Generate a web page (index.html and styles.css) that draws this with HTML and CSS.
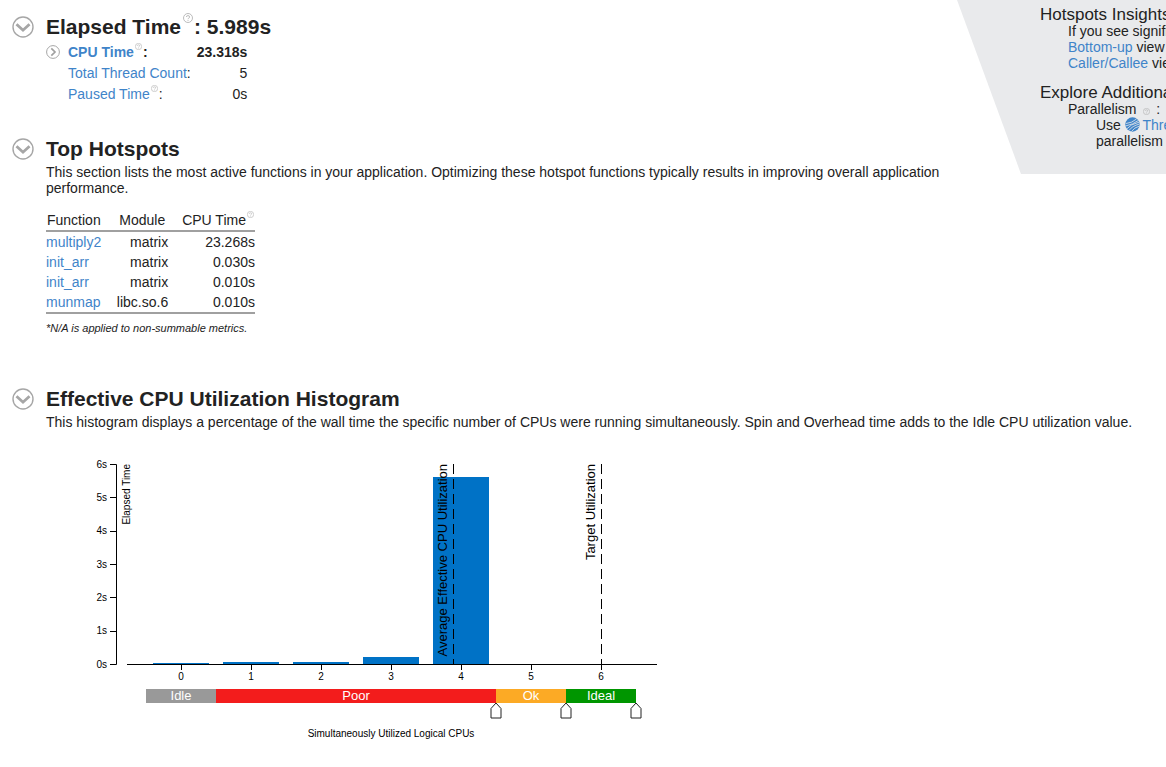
FILE: index.html
```html
<!DOCTYPE html>
<html lang="en">
<head>
<meta charset="utf-8">
<title>Hotspots Summary</title>
<link rel="stylesheet" href="styles.css">
</head>
<body>
<svg class="defs" aria-hidden="true">
  <symbol id="down" viewBox="0 0 22 22"><circle cx="11" cy="11" r="10" fill="none" stroke="#a6a6a6" stroke-width="1.4"/><path d="M4.500 8.200 11 14.200 17.500 8.200" fill="none" stroke="#a6a6a6" stroke-width="2.8"/></symbol>
  <symbol id="right" viewBox="0 0 14 14"><circle cx="7" cy="7" r="6.400" fill="none" stroke="#a6a6a6"/><path d="M5.300 3.300 9 7 5.300 10.700" fill="none" stroke="#a0a0a0" stroke-width="1.700"/></symbol>
  <symbol id="help" viewBox="0 0 10 10"><circle cx="5" cy="5" r="4.500" fill="none" stroke="#b4b4b4" stroke-width=".9"/><path d="M3.400 4Q3.400 2.600 5 2.600T6.600 4Q6.600 4.800 5.700 5.200 5 5.500 5 6.200M5 7v.9" fill="none" stroke="#b4b4b4" stroke-width=".9"/></symbol>
</svg>
<div class="top">
  <main class="summary">
    <section class="section">
      <button class="toggle" aria-label="Collapse Elapsed Time"><svg><use href="#down"/></svg></button>
      <div class="content">
        <h1 class="title">Elapsed Time<svg class="help help-large"><use href="#help"/></svg>: 5.989s</h1>
        <table class="metrics">
          <tr class="strong"><td class="expand"><button class="expander" aria-label="Expand CPU Time"><svg><use href="#right"/></svg></button></td><th><a href="#cpu">CPU Time</a><svg class="help"><use href="#help"/></svg>:</th><td class="value">23.318s</td></tr>
          <tr><td></td><th><a href="#threads">Total Thread Count</a>:</th><td class="value">5</td></tr>
          <tr><td></td><th><a href="#paused">Paused Time</a><svg class="help"><use href="#help"/></svg>:</th><td class="value">0s</td></tr>
        </table>
      </div>
    </section>
    <section class="section">
      <button class="toggle" aria-label="Collapse Top Hotspots"><svg><use href="#down"/></svg></button>
      <div class="content">
        <h2 class="title">Top Hotspots</h2>
        <p class="text">This section lists the most active functions in your application. Optimizing these hotspot functions typically results in improving overall application performance.</p>
        <table class="hotspots">
          <thead><tr><th>Function</th><th>Module</th><th>CPU Time<svg class="help"><use href="#help"/></svg></th></tr></thead>
          <tbody>
            <tr><td><a href="#f1">multiply2</a></td><td>matrix</td><td>23.268s</td></tr>
            <tr><td><a href="#f2">init_arr</a></td><td>matrix</td><td>0.030s</td></tr>
            <tr><td><a href="#f3">init_arr</a></td><td>matrix</td><td>0.010s</td></tr>
            <tr><td><a href="#f4">munmap</a></td><td>libc.so.6</td><td>0.010s</td></tr>
          </tbody>
        </table>
        <p class="note">*N/A is applied to non-summable metrics.</p>
      </div>
    </section>
  </main>
  <aside class="insights">
    <h3 class="subtitle">Hotspots Insights</h3>
    <p class="hint">If you see significant<br><a href="#bottom-up">Bottom-up</a> view<br><a href="#caller">Caller/Callee</a> view</p>
    <h3 class="subtitle">Explore Additional</h3>
    <div class="hint">Parallelism <svg class="help help-inline"><use href="#help"/></svg> :
      <p class="hint">Use <svg class="logo" viewBox="0 0 15 15"><circle cx="7.500" cy="7.500" r="7.200" fill="#3f84c9"/><path d="M1 6.500Q7 6 11.500 2M.5 9Q8 7.500 13.300 3.500M2 11.700Q5 7.500 14 5.200M4 13.500Q7 9 14.500 7M6.500 14.500Q9 10.500 14.600 9" fill="none" stroke="#e9eaec" stroke-width=".8"/></svg> <a href="#threading">Threading</a><br>parallelism</p>
    </div>
  </aside>
</div>
<section class="section">
  <button class="toggle" aria-label="Collapse Effective CPU Utilization Histogram"><svg><use href="#down"/></svg></button>
  <div class="content">
    <h2 class="title">Effective CPU Utilization Histogram</h2>
    <p class="text">This histogram displays a percentage of the wall time the specific number of CPUs were running simultaneously. Spin and Overhead time adds to the Idle CPU utilization value.</p>
    <svg class="chart" viewBox="46 446 640 300" width="640" height="300" role="img" aria-label="CPU utilization histogram">
      <g fill="#0072c6">
        <path d="M153 663h56v1h-56zM223 662h56v2h-56zM293 662h56v2h-56zM363 657h56v7h-56zM433 477h56v187h-56z"/>
      </g>
      <g class="axis">
        <path d="M110 464.500h6.500v200h-6.500M110 497.500h6M110 531.500h6M110 564.500h6M110 597.500h6M110 631.500h6"/>
        <path d="M127 664.500h530M181.500 664v6M251.500 664v6M321.500 664v6M391.500 664v6M461.500 664v6M531.500 664v6M601.500 664v6"/>
        <path d="M453.500 464v200M601.500 464v200" stroke-dasharray="10 5"/>
      </g>
      <g class="tick tick-y">
        <text x="107" y="468">6s</text><text x="107" y="501">5s</text><text x="107" y="534">4s</text><text x="107" y="568">3s</text><text x="107" y="601">2s</text><text x="107" y="634">1s</text><text x="107" y="668">0s</text>
        <text transform="translate(130 464) rotate(-90)">Elapsed Time</text>
      </g>
      <g class="tick">
        <text x="181" y="680">0</text><text x="251" y="680">1</text><text x="321" y="680">2</text><text x="391" y="680">3</text><text x="461" y="680">4</text><text x="531" y="680">5</text><text x="601" y="680">6</text>
        <text x="391" y="737">Simultaneously Utilized Logical CPUs</text>
      </g>
      <g class="marker-label">
        <text transform="translate(447 464) rotate(-90)">Average Effective CPU Utilization</text>
        <text transform="translate(595 464) rotate(-90)">Target Utilization</text>
      </g>
      <path fill="#999" d="M146 689h70v14h-70z"/><path fill="#f31c1c" d="M216 689h280v14H216z"/><path fill="#fcaa25" d="M496 689h70v14h-70z"/><path fill="#009600" d="M566 689h70v14h-70z"/>
      <g class="band"><text x="181" y="700">Idle</text><text x="356" y="700">Poor</text><text x="531" y="700">Ok</text><text x="601" y="700">Ideal</text></g>
      <path class="handle" d="M496 703 501 708.500V718H491V708.500ZM566 703 571 708.500V718H561V708.500ZM636 703 641 708.500V718H631V708.500Z"/>
    </svg>
  </div>
</section>
</body>
</html>
```
FILE: styles.css
```css
body {
  margin: 0;
  background: #fff;
  color: #222;
  font: 14px/16px "Liberation Sans", Arial, sans-serif;
  overflow-x: hidden;
}
a { color: #3f84c9; text-decoration: none; }
p, h1, h2, h3 { margin: 0; }
table { border-collapse: collapse; }
th { font-weight: normal; text-align: left; }
th, td { padding: 0; }
button { padding: 0; border: 0; background: none; }
.defs { display: none; }

.top { display: flex; align-items: flex-start; }
.summary { flex: 1; min-width: 0; }
.section { display: flex; align-items: flex-start; padding: 15px 0 0 12px; }
.summary .section + .section { padding-top: 32px; }
.top + .section { padding-top: 51px; }
.content { flex: 1; min-width: 0; }
.toggle { flex: none; width: 34px; margin-top: 1px; text-align: left; }
.toggle svg { display: block; width: 22px; height: 22px; }
.title { font-size: 21px; line-height: 24px; }
.text { margin-top: 3px; }

.help { width: 7px; height: 7px; margin: 0 1px; vertical-align: 7px; }
.help-large { width: 10px; height: 10px; margin: -8px 1px 0 2px; vertical-align: 11px; }
.help-inline { vertical-align: -1px; margin: 0 2px 0 3px; }

.metrics { margin-top: 3px; line-height: 21px; }
.metrics tr { height: 21px; }
.expand { width: 22px; }
.expander { display: block; width: 14px; height: 14px; margin-bottom: 2px; }
.expander svg { display: block; width: 14px; height: 14px; }
.value { padding-left: 6px; text-align: right; }
.strong, .strong th { font-weight: bold; }

.hotspots { margin-top: 14px; line-height: 20px; }
.hotspots thead tr { border-bottom: 2px solid #a0a0a0; }
.hotspots tbody { border-bottom: 2px solid #a0a0a0; }
.hotspots th { padding: 0 0 0 1px; }
.hotspots td + td { text-align: right; }
.hotspots th + th { padding: 0 3px 0 18px; }
.hotspots th:last-child { padding: 0 0 0 14px; }
.hotspots td:nth-child(2) { padding-left: 15px; }
.note { margin-top: 6px; font-size: 11px; font-style: italic; }

.insights {
  flex: none;
  box-sizing: border-box;
  width: 209px;
  padding: 6px 0 25px 83px;
  overflow: hidden;
  white-space: nowrap;
  background: #e9eaec;
  clip-path: polygon(0 0, 100% 0, 100% 100%, 64px 100%);
}
.subtitle { font-size: 17px; line-height: 17px; font-weight: normal; }
.hint { padding-left: 28px; }
.hint + .subtitle { margin-top: 13px; }
.logo { width: 15px; height: 15px; margin-right: -1px; vertical-align: -2px; }

.chart { display: block; margin-top: 16px; }
.axis { fill: none; stroke: #000; }
.tick { font-size: 10px; text-anchor: middle; fill: #000; }
.tick-y { text-anchor: end; }
.marker-label { font-size: 13px; text-anchor: end; fill: #000; }
.band { font-size: 13px; text-anchor: middle; fill: #fff; }
.handle { fill: #fff; stroke: #222; }
```
